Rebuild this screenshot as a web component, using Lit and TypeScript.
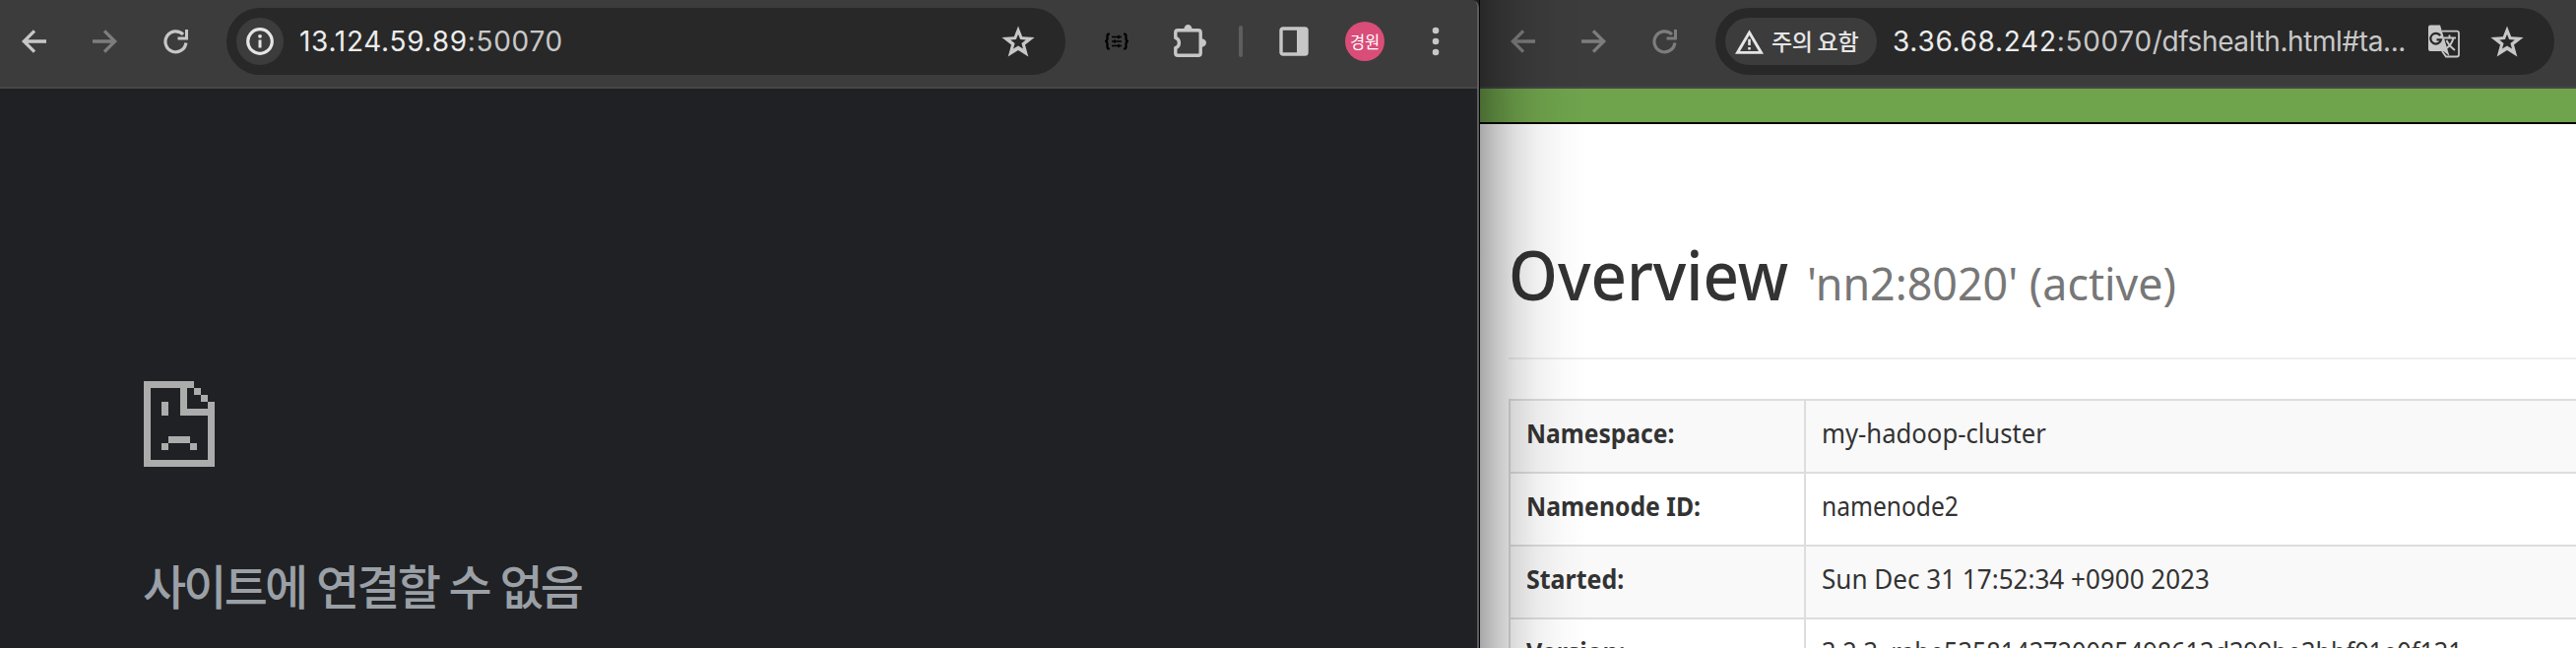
import { LitElement, html, css, svg } from "lit";
import { customElement, property } from "lit/decorators.js";
import { styleMap } from "lit/directives/style-map.js";

const icons = {
  back: svg`<path d="M2.5 13H25M13 2.3L2.3 13L13 23.7" fill="none" stroke="currentColor" stroke-width="3.3"/>`,
  forward: svg`<path d="M0 13H22.5M12 2.3L22.7 13L12 23.7" fill="none" stroke="currentColor" stroke-width="3.3"/>`,
  reload: svg`<path d="M22.9 14.5A10.5 10.5 0 1 1 20 6" fill="none" stroke="currentColor" stroke-width="3.2"/><path d="M22 1H25V11.5H14.5V8.5H22Z" fill="currentColor"/>`,
  star: svg`<path fill-rule="evenodd" fill="currentColor" d="M17 0.5L21.2 11.2L33.6 12L24 19.6L27.3 31.6L17 25L6.700 31.600L10 19.600L0.400 12L12.800 11.200ZM17 8.800L14.900 14.100L9.200 14.500L13.600 18L12 23.600L17 20.600L22 23.600L20.400 18L24.800 14.500L19.100 14.100Z"/>`,
};

@customElement("nav-buttons")
class NavButtons extends LitElement {
  @property() tone = "";
  static styles = css`
    :host { display: flex; align-items: center; gap: 46px; color: #c7c7c7; flex: none; }
    svg { display: block; width: 26px; height: 26px; }
    .dim { color: #7d7d7d; }
  `;
  render() {
    const t = this.tone === "dim" ? "dim" : "";
    return html`
      <svg class=${t} viewBox="0 0 26 26">${icons.back}</svg>
      <svg class="dim" viewBox="0 0 26 26">${icons.forward}</svg>
      <svg class=${t} viewBox="0 0 26 26">${icons.reload}</svg>
    `;
  }
}

const chrome = css`
  .toolbar { display: flex; align-items: center; height: 90px; padding-bottom: 4px; box-sizing: border-box; background: #3c3c3c; border-bottom: 2px solid #474747; }
  .omnibox { display: flex; align-items: center; height: 68px; border-radius: 34px; background: #282828; box-sizing: border-box; flex: none; }
  .chip { display: flex; align-items: center; height: 48px; border-radius: 24px; background: #3c3c3c; color: #e5e5e5; box-sizing: border-box; flex: none; }
  .url { font: 400 28px/40px Inter, "Noto Sans CJK KR", sans-serif; letter-spacing: 0.7px; color: #ececec; white-space: nowrap; }
  .rest { color: #c8c8c8; }
  .path { letter-spacing: -0.4px; }
  svg { display: block; flex: none; }
  .star { width: 34px; height: 32px; color: #c7c7c7; }
`;

@customElement("error-window")
class ErrorWindow extends LitElement {
  static styles = [chrome, css`
    :host { display: flex; flex-direction: column; width: 1503px; height: 658px; box-sizing: border-box; border-right: 1px solid #050505; background: #202124; flex: none; }
    .frame { flex: 1; border-right: 2px solid #5c5c5e; border-top-right-radius: 8px; overflow: hidden; }
    .toolbar { padding-left: 22px; }
    .omnibox { width: 852px; margin-left: 38px; padding: 0 31px 0 10px; }
    .chip { width: 48px; justify-content: center; }
    .url { margin-left: 16px; flex: 1; }
    .braces { margin-left: 39px; }
    .puzzle { margin-left: 45px; }
    .sep { width: 4px; height: 32px; border-radius: 2px; background: #5e5e5e; margin-left: 32px; }
    .panel { margin-left: 37px; }
    .avatar { display: flex; align-items: center; justify-content: center; width: 40px; height: 40px; border-radius: 50%; background: #d94d78; color: #fff; font: 400 16.5px/40px "Noto Sans CJK KR", sans-serif; margin-left: 37px; letter-spacing: -0.3px; }
    .dots { margin-left: 48px; }
    .body { padding: 297px 0 0 146px; }
    h1 { margin: 83px 0 0 -1px; font: 500 48px/72px "Noto Sans CJK KR", sans-serif; letter-spacing: -2.8px; word-spacing: 2.5px; color: #9aa0a6; white-space: nowrap; }
  `];
  render() {
    return html`<div class="frame">
      <div class="toolbar">
        <nav-buttons></nav-buttons>
        <div class="omnibox">
          <div class="chip">
            <svg width="28" height="28" viewBox="0 0 28 28"><circle cx="14" cy="14" r="12.300" fill="none" stroke="currentColor" stroke-width="3.200"/><path d="M14 12.500V20.500" stroke="currentColor" stroke-width="3"/><circle cx="14" cy="8.800" r="1.900" fill="currentColor"/></svg>
          </div>
          <div class="url">13.124.59.89<span class="rest">:50070</span></div>
          <svg class="star" viewBox="0 0 34 32">${icons.star}</svg>
        </div>
        <svg class="braces" width="26" height="18" viewBox="0 0 26 18" fill="none" stroke="#000" stroke-width="2.200"><path d="M6 1.500H5Q3.500 1.500 3.500 3.500V6.500Q3.500 9 1 9Q3.500 9 3.500 11.500V14.500Q3.500 16.500 5 16.500H6M20 1.500H21Q22.500 1.500 22.500 3.500V6.500Q22.500 9 25 9Q22.500 9 22.500 11.500V14.500Q22.500 16.500 21 16.500H20"/><path d="M8 4.500H18M8 9H18M8 13.500H18M15 2.800V6.200M11 7.300V10.700M15 11.800V15.200" stroke-width="1.500"/></svg>
        <svg class="puzzle" width="34" height="40" viewBox="0 0 34 40"><path d="M4 8.800H25Q27.200 8.800 27.200 11V32Q27.200 34.200 25 34.200H4Q1.800 34.200 1.800 32V26.600A5.400 5.400 0 0 0 1.800 16.400V11Q1.800 8.800 4 8.800Z" fill="none" stroke="#c7c7c7" stroke-width="3.400" stroke-linejoin="round"/><path d="M10.300 8A4.200 5 0 0 1 18.700 8ZM28 17.300A5 4.200 0 0 1 28 25.700Z" fill="#c7c7c7"/></svg>
        <div class="sep"></div>
        <svg class="panel" width="30" height="30" viewBox="0 0 30 30"><rect x="2" y="2" width="26" height="26" rx="1.800" fill="none" stroke="#c7c7c7" stroke-width="3.400"/><path d="M18 2H27V28H18Z" fill="#c7c7c7"/></svg>
        <div class="avatar">경원</div>
        <svg class="dots" width="8" height="30" viewBox="0 0 8 30" fill="#c7c7c7"><circle cx="4" cy="4" r="3.300"/><circle cx="4" cy="15" r="3.300"/><circle cx="4" cy="26" r="3.300"/></svg>
      </div>
      <div class="body">
        <svg width="72" height="87" viewBox="0 0 72 87" fill="#acacac" shape-rendering="crispEdges"><path d="M0 0H51V7H44V28H65V21H72V87H0ZM7 7V80H65V35H37V7Z" fill-rule="evenodd"/><path d="M51 7H58V14H51ZM58 14H65V21H58ZM18 21H25V35H18ZM25 56H47V63H25ZM18 63H25V70H18ZM47 63H54V70H47Z"/></svg>
        <h1>사이트에 연결할 수 없음</h1>
      </div>
    </div>`;
  }
}

/* Each cell carries its text and the horizontal condensing applied to it. */
const rows = [
  ["Namespace:", 0.911, "my-hadoop-cluster", 0.95],
  ["Namenode ID:", 0.917, "namenode2", 0.91],
  ["Started:", 0.925, "Sun Dec 31 17:52:34 +0900 2023", 0.965],
  ["Version:", 0.925, "3.2.3, rabe5358143720085498613d399be3bbf01e0f131", 0.935],
] as const;
const condense = (n: number) => styleMap({ transform: `scaleX(${n})` });

@customElement("health-window")
class HealthWindow extends LitElement {
  static styles = [chrome, css`
    :host { display: block; position: relative; flex: 1; min-width: 0; height: 658px; background: #fff; overflow: hidden; color: #333; font-family: "Noto Sans", "Open Sans", sans-serif; }
    .toolbar { padding-left: 31px; }
    .omnibox { width: 852px; margin-left: 38px; padding: 0 31px 0 10px; }
    .chip { width: 154px; padding-left: 10px; font: 500 23px/46px "Noto Sans CJK KR", sans-serif; letter-spacing: -0.3px; white-space: nowrap; }
    .chip span { margin: -2px 0 0 8px; }
    .url { margin-left: 16px; flex: 1; }
    .translate { margin-right: 31px; }
    .nav { height: 34px; background: #6fa34c; border-bottom: 2px solid #080808; }
    .page { padding-left: 29px; }
    header { display: flex; align-items: baseline; height: 239px; padding-top: 102px; box-sizing: border-box; border-bottom: 2px solid #eee; white-space: nowrap; }
    .title { width: 303px; font-size: 69px; line-height: 100px; font-weight: 500; transform-origin: 0 0; }
    .sub { font-size: 45px; color: #777; font-weight: 400; }
    .fit { display: inline-block; transform-origin: 0 50%; white-space: nowrap; }
    .table { margin-top: 40px; border: 2px solid #ddd; border-right: 0; }
    .row { display: grid; grid-template-columns: 298px 1fr; height: 72px; border-bottom: 2px solid #ddd; font-size: 27px; line-height: 66px; }
    .row:nth-child(odd) { background: #f9f9f9; }
    .cell { padding-left: 16px; }
    .cell + .cell { border-left: 2px solid #ddd; }
    .key { font-weight: 700; }
    .shade { position: absolute; inset: 0 auto 0 0; width: 110px; background: linear-gradient(90deg, rgba(0,0,0,.34), rgba(0,0,0,.23) 14%, rgba(0,0,0,.13) 32%, rgba(0,0,0,.06) 52%, rgba(0,0,0,.02) 76%, transparent); }
  `];
  render() {
    return html`
      <div class="toolbar">
        <nav-buttons tone="dim"></nav-buttons>
        <div class="omnibox">
          <div class="chip">
            <svg width="29" height="25" viewBox="0 0 29 25"><path d="M14.500 3L26.500 23.400H2.500Z" fill="none" stroke="currentColor" stroke-width="2.900"/><path d="M14.500 9.800V16M14.500 18V20.600" stroke="currentColor" stroke-width="2.600"/></svg>
            <span>주의 요함</span>
          </div>
          <div class="url">3.36.68.242<span class="rest">:50070<span class="path">/dfshealth.html#ta...</span></span></div>
          <svg class="translate" width="32" height="34" viewBox="0 0 32 34"><path d="M14 6.700H29Q31 6.700 31 8.700V30.500Q31 32.500 29 32.500H18L14 27" fill="none" stroke="#c7c7c7" stroke-width="1.800"/><path d="M2 0.500H12L21.500 32L15.500 27H2Q0 27 0 25V2.500Q0 .5 2 .5Z" fill="#c7c7c7"/><path d="M12.200 11.200A5.400 5.400 0 1 0 13 15.300H8.500" fill="none" stroke="#282828" stroke-width="2.200"/><path d="M16 13.500H28M21.500 10.500V13.500M25.500 13.500Q24 20 18.500 24M18.500 16Q21 21.500 27 26" fill="none" stroke="#c7c7c7" stroke-width="1.900"/></svg>
          <svg class="star" viewBox="0 0 34 32">${icons.star}</svg>
        </div>
      </div>
      <div class="nav"></div>
      <div class="page">
        <header>
          <span class="title fit" style=${condense(0.922)}>Overview</span>
          <span class="sub fit" style=${condense(0.995)}>'nn2:8020' (active)</span>
        </header>
        <div class="table">
          ${rows.map(([k, ks, v, vs]) => html`<div class="row">
            <div class="cell key"><span class="fit" style=${condense(ks)}>${k}</span></div>
            <div class="cell"><span class="fit" style=${condense(vs)}>${v}</span></div>
          </div>`)}
        </div>
      </div>
      <div class="shade"></div>
    `;
  }
}

@customElement("app-root")
export class AppRoot extends LitElement {
  static styles = css`:host { display: flex; width: 2616px; height: 658px; overflow: hidden; background: #202020; }`;
  render() {
    return html`<error-window></error-window><health-window></health-window>`;
  }
}
